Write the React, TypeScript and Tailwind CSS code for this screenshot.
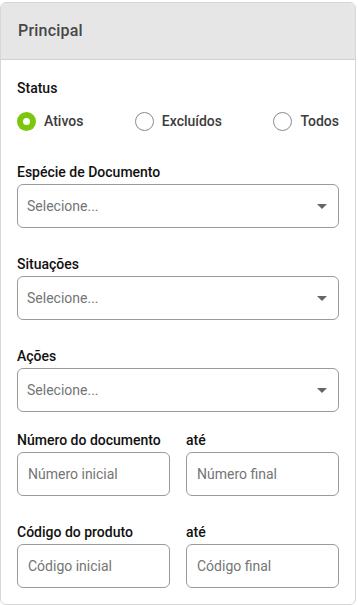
import React from 'react';

const font = { fontFamily: 'Roboto, "Noto Sans", Arial, sans-serif' };

type RadioProps = { label: string; checked?: boolean };

const Radio: React.FC<RadioProps> = ({ label, checked }) => (
  <label className="flex items-center gap-[8px]">
    {checked ? (
      <span className="flex h-[19px] w-[19px] items-center justify-center rounded-full bg-[#7cc70e]">
        <span className="h-[7px] w-[7px] rounded-full bg-white" />
      </span>
    ) : (
      <span className="h-[19px] w-[19px] rounded-full border border-[#8a8a8a] bg-white" />
    )}
    <span className="text-[14px] font-medium leading-5 text-[#3c3c3c]">{label}</span>
  </label>
);

const Label: React.FC<{ children: React.ReactNode }> = ({ children }) => (
  <div className="mb-[2px] text-[14px] font-medium leading-5 text-[#111]">{children}</div>
);

const Select: React.FC<{ label: string; gap?: string }> = ({ label, gap = 'mb-[26px]' }) => (
  <div className={gap}>
    <Label>{label}</Label>
    <div className="flex h-[44px] items-center justify-between rounded-[6px] border border-[#9a9a9a] bg-white pl-[9px] pr-[11px]">
      <span className="text-[14px] text-[#757575]">Selecione...</span>
      <svg width="10" height="5" viewBox="0 0 10 5">
        <path d="M0 0h10L5 5z" fill="#666" />
      </svg>
    </div>
  </div>
);

const Input: React.FC<{ placeholder: string }> = ({ placeholder }) => (
  <div className="flex h-[44px] items-center rounded-[6px] border border-[#9a9a9a] bg-white px-[10px]">
    <span className="text-[14px] text-[#757575]">{placeholder}</span>
  </div>
);

const RangeRow: React.FC<{ label: string; from: string; to: string; last?: boolean }> = ({ label, from, to, last }) => (
  <div className={`grid grid-cols-2 gap-x-[16px] ${last ? '' : 'mb-[26px]'}`}>
    <div>
      <Label>{label}</Label>
      <Input placeholder={from} />
    </div>
    <div>
      <Label>até</Label>
      <Input placeholder={to} />
    </div>
  </div>
);

export default function App() {
  return (
    <div className="bg-white pt-[2px]" style={font}>
      <div className="w-[356px] overflow-hidden rounded-[6px] border border-[#d6d6d6] bg-white">
        <div className="flex h-[57px] items-center border-b border-[#d0d0d0] bg-[#e6e6e6] px-[17px]">
          <h2 className="text-[16px] font-medium tracking-[0.2px] text-[#474747]">Principal</h2>
        </div>
        <div className="px-[16px] pb-[16px] pt-[18px]">
          <div className="text-[14px] font-medium leading-5 text-[#111]">Status</div>
          <div className="mb-[31px] mt-[13px] flex items-center justify-between">
            <Radio label="Ativos" checked />
            <Radio label="Excluídos" />
            <Radio label="Todos" />
          </div>
          <Select label="Espécie de Documento" />
          <Select label="Situações" />
          <Select label="Ações" gap="mb-[18px]" />
          <RangeRow label="Número do documento" from="Número inicial" to="Número final" />
          <RangeRow label="Código do produto" from="Código inicial" to="Código final" last />
        </div>
      </div>
    </div>
  );
}
